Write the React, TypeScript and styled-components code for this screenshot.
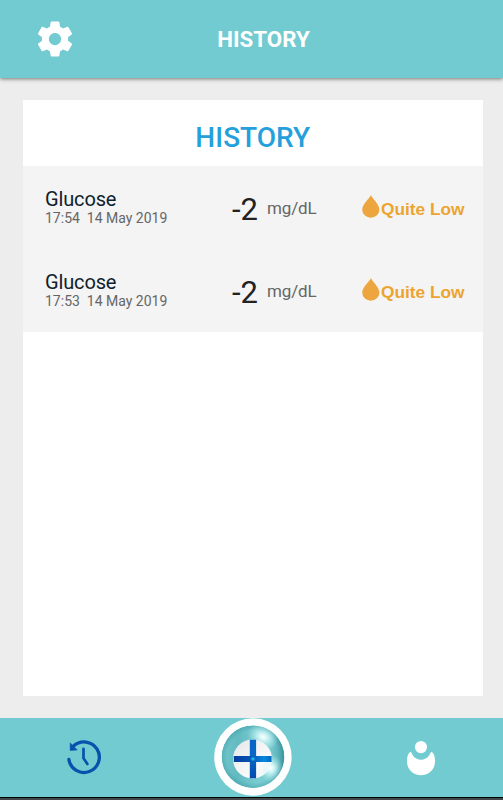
import React from "react";
import styled, { createGlobalStyle } from "styled-components";

const GlobalStyle = createGlobalStyle`
  * { box-sizing: border-box; }
  body { margin: 0; font-family: Roboto, sans-serif; background: #ededed; }
`;

const Screen = styled.div`
  width: 503px;
  height: 800px;
  display: flex;
  flex-direction: column;
  background: #ededed;
  overflow: hidden;
`;

const Header = styled.header`
  height: 78px;
  flex: none;
  display: grid;
  grid-template-columns: 110px 1fr 86px;
  align-items: center;
  background: #72cbd0;
  box-shadow: 0 1px 4px rgba(0, 0, 0, 0.5);
`;

const IconButton = styled.button`
  display: flex;
  justify-content: center;
  align-items: center;
  padding: 0;
  border: 0;
  background: none;

  svg { display: block; }
`;

const HeaderTitle = styled.h1`
  margin: 0;
  display: flex;
  justify-content: center;
  color: #fff;
  font-size: 22.3px;
  line-height: 26px;
  font-weight: 700;
  white-space: nowrap;
`;

const Content = styled.main`
  flex: 1;
  padding: 22px 20px 22px 22.5px;
  display: flex;
`;

const Card = styled.section`
  flex: 1;
  min-width: 0;
  background: #fff;
`;

const CardTitle = styled.h2`
  margin: 0;
  height: 66px;
  padding-top: 5px;
  display: flex;
  justify-content: center;
  line-height: 66px;
  font-size: 28px;
  font-weight: 500;
  color: #26a0da;
`;

const Row = styled.article`
  height: 83px;
  display: grid;
  grid-template-columns: 187px 130px 1fr;
  padding-left: 22.5px;
  background: #f4f4f4;
`;

const Entry = styled.div`
  padding-top: 22px;
`;

const EntryName = styled.div`
  font-size: 20px;
  line-height: 23px;
  letter-spacing: -0.15px;
  color: #10222c;
`;

const EntryTime = styled.div`
  font-size: 14px;
  line-height: 14px;
  color: #666;
  white-space: pre;
`;

const Reading = styled.div`
  display: flex;
  align-items: flex-start;
  padding-top: 26px;
`;

const Value = styled.span`
  width: 35px;
  font-size: 31px;
  line-height: 36px;
  color: #222;
`;

const Unit = styled.span`
  padding-top: 6px;
  font-size: 17px;
  line-height: 20px;
  letter-spacing: -0.15px;
  color: #666;
`;

const Status = styled.div`
  display: flex;
  align-items: flex-start;
  padding-top: 29px;
  color: #eca430;
`;

const StatusLabel = styled.span`
  font-family: "Liberation Sans", Arial, sans-serif;
  font-size: 17.3px;
  line-height: 20px;
  padding-top: 4px;
  font-weight: 700;
  white-space: nowrap;
`;

const Footer = styled.nav`
  height: 79px;
  flex: none;
  display: grid;
  grid-template-columns: 168px 169px 168px;
  align-items: center;
  background: #72cbd0;
`;

const SystemBar = styled.div`
  height: 3px;
  flex: none;
  background: #44494c;
  border-top: 1px solid #000;
`;

const GearIcon = () => (
  <svg width="42" height="42" viewBox="0 0 24 24" fill="#fff">
    <path d="M19.43 12.98c.04-.32.07-.64.07-.98s-.03-.66-.07-.98l2.11-1.65c.19-.15.24-.42.12-.64l-2-3.46c-.12-.22-.39-.3-.61-.22l-2.49 1c-.52-.4-1.08-.73-1.69-.98l-.38-2.65C14.46 2.18 14.25 2 14 2h-4c-.25 0-.46.18-.49.42l-.38 2.65c-.61.25-1.17.59-1.69.98l-2.49-1c-.23-.09-.49 0-.61.22l-2 3.46c-.13.22-.07.49.12.64l2.11 1.65c-.04.32-.07.65-.07.98s.03.66.07.98l-2.11 1.65c-.19.15-.24.42-.12.64l2 3.46c.12.22.39.3.61.22l2.49-1c.52.4 1.08.73 1.69.98l.38 2.65c.03.24.24.42.49.42h4c.25 0 .46-.18.49-.42l.38-2.65c.61-.25 1.17-.59 1.69-.98l2.49 1c.23.09.49 0 .61-.22l2-3.46c.12-.22.07-.49-.12-.64l-2.11-1.65zM12 15.5c-1.93 0-3.5-1.57-3.5-3.5s1.57-3.5 3.5-3.5 3.5 1.57 3.5 3.5-1.57 3.5-3.5 3.5z" />
  </svg>
);

const DropIcon = () => (
  <svg width="19" height="24" viewBox="0 0 19 24" fill="#eda63f">
    <path d="M8.9 .1C7.6 3.9 .2 9.1 .2 14.6A8.6 8.1 0 0 0 17.4 14.6C17.4 9.1 10.2 3.9 8.9 .1Z" />
  </svg>
);

const HistoryIcon = () => (
  <svg width="40" height="41" viewBox="0 0 40 41" fill="none">
    <g transform="translate(0 .7)">
      <path
        d="M4.9 21.8A15.3 15.3 0 1 0 9.6 8.3"
        stroke="#0752ad"
        strokeWidth="3.3"
        strokeLinecap="round"
      />
      <path d="M6.2 5.2V12.7L13.2 12.2Z" fill="#0752ad" stroke="#0752ad" strokeWidth=".6" />
      <path
        d="M19.5 11.1V20.5L23.4 26.3"
        stroke="#0752ad"
        strokeWidth="2.7"
        strokeLinecap="round"
        strokeLinejoin="round"
      />
    </g>
  </svg>
);

const AddIcon = () => (
  <svg width="80" height="79" viewBox="0 0 80 79">
    <defs>
      <radialGradient id="rim">
        <stop offset=".82" stopColor="#278e99" stopOpacity="0" />
        <stop offset="1" stopColor="#278993" stopOpacity=".35" />
      </radialGradient>
      <radialGradient id="glow">
        <stop offset="0" stopColor="#fff" />
        <stop offset=".25" stopColor="#eaffff" stopOpacity=".8" />
        <stop offset="1" stopColor="#b5f4f6" stopOpacity="0" />
      </radialGradient>
      <linearGradient id="edge" x1="0" x2="1" y1=".5" y2=".5">
        <stop offset=".76" stopColor="#167681" stopOpacity="0" />
        <stop offset="1" stopColor="#126f7c" stopOpacity=".5" />
      </linearGradient>
      <linearGradient id="shade">
        <stop stopColor="#4fabb3" stopOpacity=".2" />
        <stop offset=".25" stopColor="#4aa8b0" stopOpacity=".5" />
        <stop offset=".6" stopColor="#4aa8b0" stopOpacity="0" />
      </linearGradient>
      <linearGradient id="disc" x1="0" x2="1" y1="0" y2="1">
        <stop stopColor="#e6e6e9" />
        <stop offset=".65" stopColor="#fafafa" />
        <stop offset="1" stopColor="#e8f4f6" />
      </linearGradient>
      <linearGradient id="vertical" x1="0" x2="0" y1="0" y2="1">
        <stop stopColor="#0865c8" />
        <stop offset=".46" stopColor="#0868c6" />
        <stop offset="1" stopColor="#034bad" />
      </linearGradient>
      <linearGradient id="horizontal">
        <stop stopColor="#033da0" />
        <stop offset=".5" stopColor="#0757b5" />
        <stop offset=".8" stopColor="#0789e0" />
        <stop offset="1" stopColor="#0766c0" />
      </linearGradient>
      <radialGradient id="spark">
        <stop stopColor="#41e1ff" />
        <stop offset="1" stopColor="#009be8" stopOpacity="0" />
      </radialGradient>
      <clipPath id="lens"><circle cx="40" cy="38.7" r="31.3" /></clipPath>
    </defs>
    <circle cx="39.9" cy="39" r="38.7" fill="#fff" />
    <g clipPath="url(#lens)">
      <circle cx="40" cy="38.7" r="31.5" fill="#7bcdd2" />
      <circle cx="40" cy="38.7" r="31.5" fill="url(#shade)" />
      <circle cx="40" cy="38.7" r="31.5" fill="url(#rim)" />
      <circle cx="40" cy="38.7" r="31.5" fill="url(#edge)" />
      <ellipse cx="50" cy="19" rx="16" ry="12" fill="url(#glow)" transform="rotate(25 50 19)" />
      <ellipse cx="58" cy="50" rx="12" ry="14" fill="url(#glow)" />
    </g>
    <circle cx="39.5" cy="41" r="19.5" fill="url(#disc)" />
    <ellipse cx="57" cy="50" rx="8" ry="9" fill="url(#glow)" opacity=".5" />
    <rect x="36.8" y="21.7" width="6.3" height="38.6" fill="url(#vertical)" />
    <rect x="20.8" y="38" width="37.8" height="6" fill="url(#horizontal)" />
    <circle cx="39.9" cy="41" r="3" fill="url(#spark)" />
  </svg>
);

const PersonIcon = () => (
  <svg width="30" height="38" viewBox="0 0 30 38" fill="#fff">
    <circle cx="15" cy="8.1" r="6.1" />
    <path d="M4 13C5.8 12.8 5.5 14.6 6.7 16.2C10.6 22.1 19.4 22.1 23.3 16.2C24.5 14.6 24.2 12.8 26 13C29 15 29.8 22.5 28.3 27C26.4 32.5 21.3 36.3 15 36.3S3.6 32.5 1.7 27C.2 22.5 1 15 4 13Z" />
  </svg>
);

const readings = [
  { name: "Glucose", time: "17:54  14 May 2019", value: "-2", unit: "mg/dL", status: "Quite Low" },
  { name: "Glucose", time: "17:53  14 May 2019", value: "-2", unit: "mg/dL", status: "Quite Low" },
];

export default function App() {
  return (
    <>
      <GlobalStyle />
      <Screen>
        <Header>
          <IconButton aria-label="Settings"><GearIcon /></IconButton>
          <HeaderTitle>HISTORY</HeaderTitle>
        </Header>
        <Content>
          <Card>
            <CardTitle>HISTORY</CardTitle>
            {readings.map((r) => (
              <Row key={r.time}>
                <Entry>
                  <EntryName>{r.name}</EntryName>
                  <EntryTime>{r.time}</EntryTime>
                </Entry>
                <Reading>
                  <Value>{r.value}</Value>
                  <Unit>{r.unit}</Unit>
                </Reading>
                <Status>
                  <DropIcon />
                  <StatusLabel>{r.status}</StatusLabel>
                </Status>
              </Row>
            ))}
          </Card>
        </Content>
        <Footer>
          <IconButton aria-label="History"><HistoryIcon /></IconButton>
          <IconButton aria-label="Add reading"><AddIcon /></IconButton>
          <IconButton aria-label="Profile"><PersonIcon /></IconButton>
        </Footer>
        <SystemBar />
      </Screen>
    </>
  );
}
